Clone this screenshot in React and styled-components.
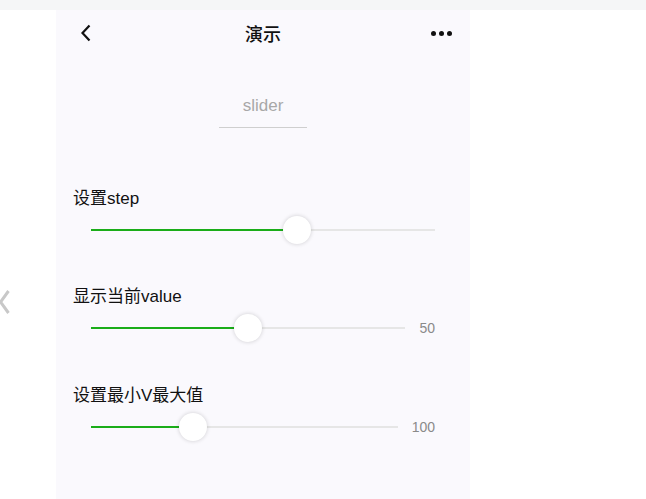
import React, { useState } from 'react';
import styled, { createGlobalStyle } from 'styled-components';

const GlobalStyle = createGlobalStyle`
  html, body {
    margin: 0;
    padding: 0;
    background: #ffffff;
    font-family: 'Liberation Sans', 'Noto Sans CJK SC', sans-serif;
  }
`;

const TopStrip = styled.div`
  height: 10px;
  background-color: #f5f6f7;
`;

const Stage = styled.div`
  position: relative;
  display: flex;
  height: 489px;
  overflow: hidden;
`;

const SideArrow = styled.svg`
  position: absolute;
  left: -2px;
  top: 279px;
`;

const Panel = styled.div`
  margin-left: 56px;
  width: 414px;
  background-color: #faf9fd;
  display: flex;
  flex-direction: column;
`;

const NavBar = styled.div`
  height: 46px;
  display: grid;
  grid-template-columns: 1fr auto 1fr;
  align-items: center;
  padding: 0 18px 0 24px;
`;

const NavTitle = styled.div`
  font-family: 'Noto Sans CJK SC', sans-serif;
  font-size: 18px;
  font-weight: 500;
  color: #111;
  margin-left: -6px;
`;

const NavButton = styled.div`
  display: flex;
  align-items: center;
  justify-content: ${(p) => (p.right ? 'flex-end' : 'flex-start')};
  gap: 3px;
`;

const Dot = styled.span`
  width: 5px;
  height: 5px;
  border-radius: 50%;
  background: #111;
`;

const InputWrap = styled.div`
  display: flex;
  justify-content: center;
  margin-top: 30px;
`;

const TextInput = styled.input`
  width: 88px;
  box-sizing: border-box;
  padding: 11px 0 12px;
  border: none;
  border-bottom: 1px solid #cfcfcf;
  background: transparent;
  outline: none;
  text-align: center;
  font-family: 'Liberation Sans', sans-serif;
  font-size: 17px;
  line-height: 18px;
  color: #333;

  &::placeholder {
    color: #a8a8a8;
  }
`;

const Section = styled.div`
  margin-top: ${(p) => p.gap}px;
`;

const Label = styled.div`
  padding-left: 17px;
  font-size: 17px;
  line-height: 22px;
  color: #111;
`;

const SliderRow = styled.div`
  display: flex;
  align-items: center;
  height: 28px;
  margin-top: 6px;
  padding: 0 35px;
`;

const Track = styled.div`
  position: relative;
  flex: 1;
  height: 2px;
  background-color: #e6e6e6;
`;

const Fill = styled.div`
  position: absolute;
  left: 0;
  top: 0;
  height: 2px;
  background-color: #1aad19;
`;

const Thumb = styled.div`
  position: absolute;
  top: 1px;
  width: 28px;
  height: 28px;
  margin-left: -14px;
  margin-top: -14px;
  border-radius: 50%;
  background: #fff;
  box-shadow: 0 0 4px rgba(0, 0, 0, 0.18);
`;

const Value = styled.span`
  margin-left: 14px;
  font-size: 14px;
  color: #8a8a8a;
  text-align: right;
`;

const Slider = ({ value, min = 0, max = 100, showValue }) => {
  const pct = ((value - min) / (max - min)) * 100;
  return (
    <SliderRow>
      <Track>
        <Fill style={{ width: `${pct}%` }} />
        <Thumb style={{ left: `${pct}%` }} />
      </Track>
      {showValue && <Value>{value}</Value>}
    </SliderRow>
  );
};

const App = () => {
  const [text, setText] = useState('');

  return (
    <>
      <GlobalStyle />
      <TopStrip />
      <Stage>
        <SideArrow width="12" height="26" viewBox="0 0 12 26">
          <path d="M10.5 2 L2.5 13 L10.5 24" fill="none" stroke="#c8c8c8" strokeWidth="3" />
        </SideArrow>
        <Panel>
          <NavBar>
            <NavButton>
              <svg width="12" height="18" viewBox="0 0 12 18">
                <path d="M9.5 1.5 L2.5 9 L9.5 16.5" fill="none" stroke="#111" strokeWidth="2.2" />
              </svg>
            </NavButton>
            <NavTitle>演示</NavTitle>
            <NavButton right>
              <Dot />
              <Dot />
              <Dot />
            </NavButton>
          </NavBar>

          <InputWrap>
            <TextInput
              placeholder="slider"
              value={text}
              onChange={(e) => setText(e.target.value)}
            />
          </InputWrap>

          <Section gap={60}>
            <Label>设置step</Label>
            <Slider value={60} />
          </Section>

          <Section gap={42}>
            <Label>显示当前value</Label>
            <Slider value={50} showValue />
          </Section>

          <Section gap={43}>
            <Label>设置最小V最大值</Label>
            <Slider value={100} max={300} showValue />
          </Section>
        </Panel>
      </Stage>
    </>
  );
};

export default App;
